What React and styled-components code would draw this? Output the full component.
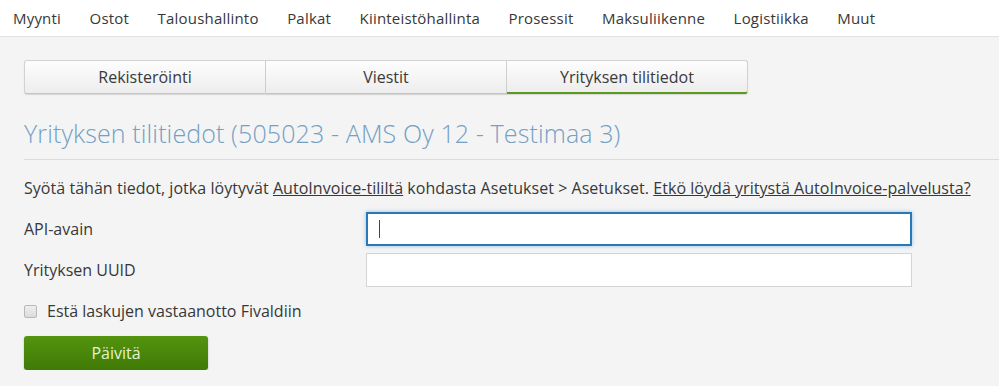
import React from "react";
import styled, { createGlobalStyle } from "styled-components";

const GlobalStyle = createGlobalStyle`
  html, body {
    margin: 0;
    padding: 0;
    background: #f4f4f4;
    font-family: "Open Sans", "Liberation Sans", sans-serif;
    color: #383838;
  }
`

const Nav = styled.nav`
  height: 37px;
  background: #fff;
  border-bottom: 1px solid #e2e2e2;
  display: flex;
  align-items: center;
  gap: 28.5px;
  padding-left: 13px;
  box-sizing: border-box;
`
const NavItem = styled.span`
  font-size: 15px;
  letter-spacing: 0.2px;
  color: #383838;
`
const Content = styled.div`
  padding: 23px 0 0 24px;
`
const Tabs = styled.div`
  display: flex;
  width: 724px;
`
const Tab = styled.div`
  flex: 1;
  height: 34px;
  display: flex;
  align-items: center;
  justify-content: center;
  font-size: 16px;
  color: #3a3a3a;
  background: linear-gradient(#fdfdfd, #ededed);
  border: 1px solid #d2d2d2;
  border-left: ${p => (p.first ? "1px solid #d2d2d2" : "none")};
  border-bottom: ${p => (p.active ? "2px solid #5b9a1c" : "1px solid #c4c4c4")};
  border-radius: ${p => (p.first ? "3px 0 0 3px" : p.last ? "0 3px 3px 0" : "0")};
  box-shadow: 0 1px 1px rgba(0, 0, 0, 0.12);
  box-sizing: border-box;
`
const Heading = styled.h1`
  margin: 24px 0 0;
  padding-bottom: 11px;
  font-size: 25px;
  font-weight: 300;
  letter-spacing: 0.12px;
  color: #73a0c4;
  border-bottom: 1px solid #dcdcdc;
  line-height: 30px;
`
const Intro = styled.p`
  margin: 17px 0 0;
  font-size: 16px;
  letter-spacing: 0.04px;
  line-height: 22px;
`
const Link = styled.span`
  text-decoration: underline;
`
const Form = styled.div`
  margin-top: 13px;
  display: grid;
  grid-template-columns: 342px 546px;
  row-gap: 7px;
  align-items: center;
`
const Label = styled.label`
  font-size: 16px;
`
const Input = styled.div`
  height: 34px;
  background: #fff;
  box-sizing: border-box;
  border: ${p => (p.focused ? "2px solid #2a78b6" : "1px solid #d4d4d4")};
  box-shadow: ${p => (p.focused ? "0 0 4px rgba(80, 160, 220, 0.6)" : "none")};
  display: flex;
  align-items: center;
  padding-left: 11px;
`
const Caret = styled.span`
  width: 1px;
  height: 18px;
  background: #444;
`
const CheckRow = styled.label`
  margin-top: 13px;
  height: 22px;
  display: flex;
  align-items: center;
  gap: 10px;
  font-size: 16px;
`
const Box = styled.span`
  width: 13px;
  height: 13px;
  box-sizing: border-box;
  border: 1px solid #b8b8b8;
  border-radius: 2px;
  background: linear-gradient(#eee, #dcdcdc);
`
const Button = styled.button`
  display: block;
  margin-top: 14px;
  width: 184px;
  height: 34px;
  border: none;
  border-radius: 3px;
  background: linear-gradient(#54940f, #3f7a06);
  box-shadow: 0 1px 2px rgba(0, 0, 0, 0.25);
  color: #e4f3cc;
  font-family: "Open Sans", "Liberation Sans", sans-serif;
  font-size: 16px;
`

const menu = ["Myynti", "Ostot", "Taloushallinto", "Palkat", "Kiinteistöhallinta", "Prosessit", "Maksuliikenne", "Logistiikka", "Muut"]

const App = () => {
    return (
        <div>
            <GlobalStyle/>
            <Nav>
                {menu.map(m => <NavItem key={m}>{m}</NavItem>)}
            </Nav>
            <Content>
                <Tabs>
                    <Tab first>Rekisteröinti</Tab>
                    <Tab>Viestit</Tab>
                    <Tab last active>Yrityksen tilitiedot</Tab>
                </Tabs>
                <Heading>Yrityksen tilitiedot (505023 - AMS Oy 12 - Testimaa 3)</Heading>
                <Intro>
                    Syötä tähän tiedot, jotka löytyvät <Link>AutoInvoice-tililtä</Link> kohdasta Asetukset &gt; Asetukset. <Link>Etkö löydä yritystä AutoInvoice-palvelusta?</Link>
                </Intro>
                <Form>
                    <Label>API-avain</Label>
                    <Input focused><Caret/></Input>
                    <Label>Yrityksen UUID</Label>
                    <Input/>
                </Form>
                <CheckRow><Box/>Estä laskujen vastaanotto Fivaldiin</CheckRow>
                <Button>Päivitä</Button>
            </Content>
        </div>
    )
}
export default App
